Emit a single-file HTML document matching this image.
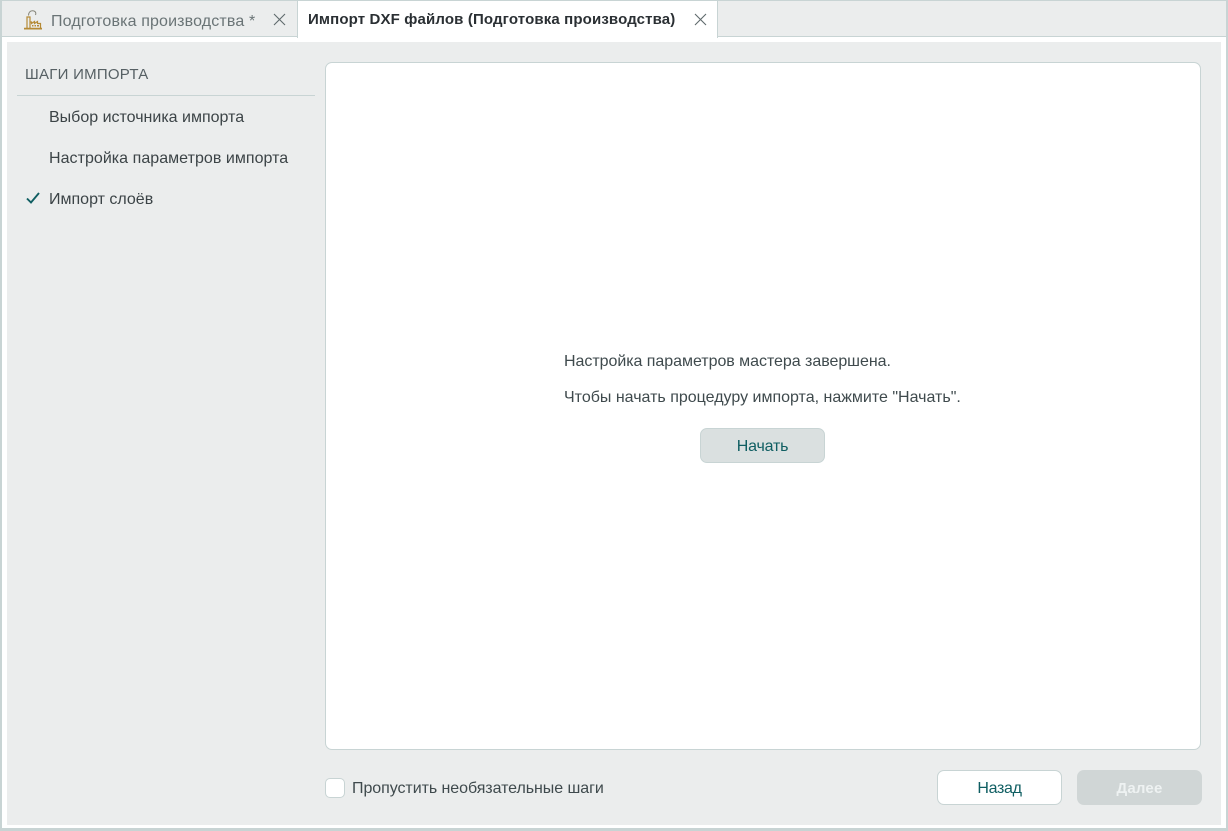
<!DOCTYPE html>
<html lang="ru"><head><meta charset="utf-8"><title>Импорт DXF</title>
<style>
*{box-sizing:border-box}
html,body{margin:0;padding:0;width:1228px;height:831px;overflow:hidden;background:#fff;font-family:"Liberation Sans","Noto Sans CJK SC",sans-serif;font-size:16px;color:#3f4a4d}
.a{position:absolute;white-space:nowrap}
#f{position:absolute;left:0;top:0;width:1228px;height:831px;border:solid #c8d4d4;border-width:1px 2px 3px 2px;pointer-events:none}
.btn{position:absolute;border-radius:7px;text-align:center;font-size:16px}
</style></head><body>
<div class="a" style="left:0;top:0;width:1228px;height:37px;background:#ebeded;border-bottom:1px solid #c8d4d4"></div>
<div class="a" style="left:297px;top:0;width:421px;height:38px;background:#fff;border-left:1px solid #c8d4d4;border-right:1px solid #c8d4d4"></div>
<svg class="a" style="left:24px;top:10px" width="18" height="20" viewBox="0 0 18 20" fill="none" stroke="#b58a35" stroke-width="1.2"><path d="M0 18.6H18" stroke-width="1.8"/><path d="M3 18V7H6V18M6 12H7.5V13.5L10.5 11.5V13.5L13.5 11.5V13.5H16.5V18"/><path d="M4.5 5.5C4.5 2.5 6 .8 8.5 .8C11 .8 12.5 2.5 11.5 5" stroke="#85857a" stroke-width="1"/><path d="M8 15.7H9.5M10.5 15.7H12M13 15.7H15" stroke-width="1.5"/></svg>
<div class="a" style="left:51px;top:13px;font-size:16px;line-height:18px;color:#6a7476;letter-spacing:.14px">Подготовка производства *</div>
<svg class="a" style="left:273px;top:13px" width="13" height="13" viewBox="0 0 13 13" stroke="#5f6a6c" stroke-width="1.1"><path d="M1 1L12 12M12 1L1 12"/></svg>
<div class="a" style="left:308px;top:11px;font-size:15px;line-height:18px;font-weight:bold;color:#2a2f33;letter-spacing:.14px">Импорт DXF файлов (Подготовка производства)</div>
<svg class="a" style="left:694px;top:13px" width="13" height="13" viewBox="0 0 13 13" stroke="#5f6a6c" stroke-width="1.1"><path d="M1 1L12 12M12 1L1 12"/></svg>

<div class="a" style="left:7px;top:42px;width:1214px;height:783px;background:#ebeded"></div>
<div class="a" style="left:25px;top:66px;font-size:15px;line-height:18px;color:#566064;letter-spacing:.25px">ШАГИ ИМПОРТА</div>
<div class="a" style="left:17px;top:95px;width:298px;height:1px;background:#c8d4d4"></div>
<div class="a" style="left:49px;top:109px;line-height:18px;color:#3c4447">Выбор источника импорта</div>
<div class="a" style="left:49px;top:150px;line-height:18px;color:#3c4447;letter-spacing:.04px">Настройка параметров импорта</div>
<svg class="a" style="left:26px;top:192px" width="14" height="12" viewBox="0 0 14 12" fill="none" stroke="#0f5e62" stroke-width="1.9"><path d="M1 6.5L5 10.5L13 1"/></svg>
<div class="a" style="left:49px;top:191px;line-height:18px;color:#3c4447">Импорт слоёв</div>

<div class="a" style="left:325px;top:62px;width:876px;height:688px;background:#fff;border:1px solid #c8d4d4;border-radius:7px"></div>
<div class="a" style="left:564px;top:353px;line-height:18px;color:#3f4a4d;letter-spacing:-.04px">Настройка параметров мастера завершена.</div>
<div class="a" style="left:564px;top:389px;line-height:18px;color:#3f4a4d">Чтобы начать процедуру импорта, нажмите "Начать".</div>
<div class="btn" style="left:700px;top:428px;width:125px;height:35px;background:#dae0e0;border:1px solid #c8d4d4;line-height:36px;color:#0f5e62;letter-spacing:-.2px">Начать</div>

<div class="a" style="left:325px;top:778px;width:20px;height:20px;background:#fff;border:1px solid #c8d4d4;border-radius:5px"></div>
<div class="a" style="left:352px;top:780px;line-height:18px;color:#3f4a4d;letter-spacing:-.06px">Пропустить необязательные шаги</div>
<div class="btn" style="left:937px;top:770px;width:125px;height:35px;background:#fff;border:1px solid #c8d4d4;line-height:36px;color:#0f5e62;letter-spacing:-.3px">Назад</div>
<div class="btn" style="left:1077px;top:770px;width:125px;height:35px;background:#d0d6d6;font-size:15px;line-height:37px;color:#eef2f2;font-weight:bold;letter-spacing:.2px">Далее</div>
<div id="f"></div>
</body></html>
